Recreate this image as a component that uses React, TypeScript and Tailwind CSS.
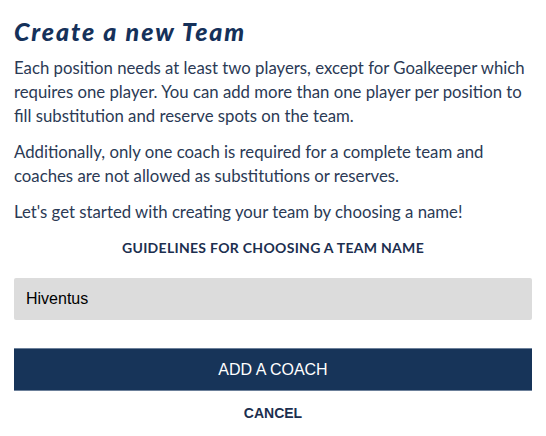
export default function App() {
  return (
    <div className="min-h-screen bg-white px-[14px] pt-[14px] font-['Lato',sans-serif] text-[#2b3a55]">
      <h1 className="text-[25px] font-black italic leading-[34px] tracking-[1.9px] text-[#15315a]">Create a new Team</h1>
      <p className="mt-[8px] text-[16.75px] leading-[24px]">
        Each position needs at least two players, except for Goalkeeper which requires one player. You can add more
        than one player per position to fill substitution and reserve spots on the team.
      </p>
      <p className="mt-[12px] text-[16.75px] leading-[24px]">
        Additionally, only one coach is required for a complete team and coaches are not allowed as substitutions or
        reserves.
      </p>
      <p className="mt-[12px] text-[16.75px] leading-[24px]">Let's get started with creating your team by choosing a name!</p>
      <div className="mt-[14px] text-center text-[14px] font-bold leading-[20px] tracking-[0.3px] text-[#1c2f4f]">
        GUIDELINES FOR CHOOSING A TEAM NAME
      </div>
      <input
        defaultValue="Hiventus"
        className="mt-[20px] block h-[42px] w-[518px] rounded-[2px] bg-[#dcdcdc] px-[12px] font-['Liberation_Sans',sans-serif] text-[16px] text-black outline-none"
      />
      <button className="mt-[28px] block h-[43px] w-[518px] border-y border-[#6c809a] bg-[#173459] font-['Liberation_Sans',sans-serif] text-[16px] text-white">
        ADD A COACH
      </button>
      <button className="mt-[12px] block w-[518px] text-center font-['Liberation_Sans',sans-serif] text-[14px] font-bold text-[#1c2f4f]">
        CANCEL
      </button>
    </div>
  );
}
